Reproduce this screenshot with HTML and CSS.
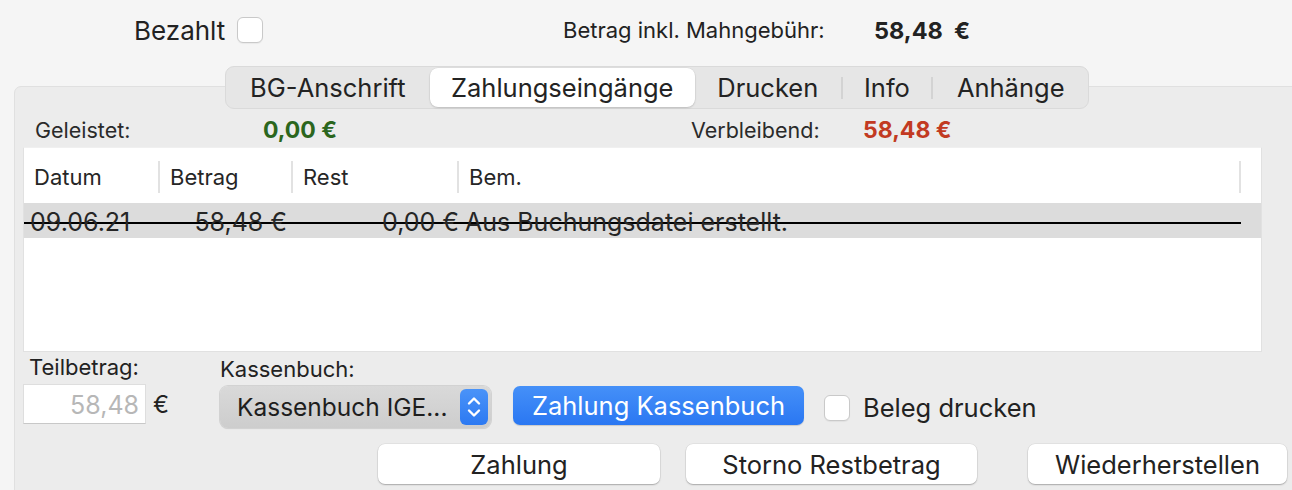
FILE: index.html
```html
<!DOCTYPE html>
<html>
	<head>
		<meta charset="utf-8">
		<title>Zahlungseingänge</title>
		<link rel="stylesheet" href="styles.css">
	</head>
	<body>
	<div class="top_row">
		<span class="paid_label">Bezahlt</span>
		<span class="check"></span>
		<span class="total_label">Betrag inkl. Mahngebühr:</span>
		<span class="total_value">58,48&nbsp; €</span>
	</div>

	<div class="panel">
		<div class="tabbar">
			<span class="tab t_bg">BG-Anschrift</span>
			<span class="tab t_pay selected">Zahlungseingänge</span>
			<span class="tab t_print">Drucken</span>
			<span class="sep"></span>
			<span class="tab t_info">Info</span>
			<span class="sep"></span>
			<span class="tab t_att">Anhänge</span>
		</div>

		<div class="sums">
			<span class="sum_label paid_sum">Geleistet:</span>
			<span class="sum_value green">0,00 €</span>
			<span class="sum_label rest_sum">Verbleibend:</span>
			<span class="sum_value red">58,48 €</span>
		</div>

		<div class="list">
			<table id="table">
				<colgroup>
					<col class="c_date">
					<col class="c_amount">
					<col class="c_rest">
					<col class="c_note">
					<col class="c_end">
				</colgroup>
				<thead>
					<tr>
						<th class="sepd">Datum</th>
						<th class="sepd">Betrag</th>
						<th class="sepd">Rest</th>
						<th class="sepd">Bem.</th>
						<th></th>
					</tr>
				</thead>
				<tbody>
					<tr class="storno">
						<td>09.06.21</td>
						<td class="num">58,48 €</td>
						<td class="num rest">0,00 €</td>
						<td class="note">Aus Buchungsdatei erstellt.</td>
						<td class="end"></td>
					</tr>
				</tbody>
			</table>
		</div>

		<div class="entry">
			<div class="field amount_field">
				<div class="label">Teilbetrag:</div>
				<div class="amount_row">
					<span class="input">58,48</span>
					<span class="euro">€</span>
				</div>
			</div>
			<div class="field book_field">
				<div class="label">Kassenbuch:</div>
				<div class="popup">
					<span class="popup_text">Kassenbuch IGE...</span>
					<span class="stepper">
						<svg width="28" height="36" viewBox="0 0 28 36">
							<path d="M9 14.5 L14 9.5 L19 14.5" fill="none" stroke="#fff" stroke-width="2.4" stroke-linecap="round" stroke-linejoin="round"/>
							<path d="M9 21.5 L14 26.5 L19 21.5" fill="none" stroke="#fff" stroke-width="2.4" stroke-linecap="round" stroke-linejoin="round"/>
						</svg>
					</span>
				</div>
			</div>
			<button type="button" class="blue_btn">Zahlung Kassenbuch</button>
			<span class="check small_check"></span>
			<span class="check_text">Beleg drucken</span>
		</div>

		<div class="actions">
			<button type="button" class="btn b_pay">Zahlung</button>
			<button type="button" class="btn b_storno">Storno Restbetrag</button>
			<button type="button" class="btn b_restore">Wiederherstellen</button>
		</div>
	</div>
	</body>
</html>
```

FILE: styles.css
```css
html,
body {
  height: 100%;
}
body {
  margin: 0;
  overflow: hidden;
  background: #f5f5f5;
  font-family: Inter, "Noto Sans", sans-serif;
  color: #222;
}

/* top line */
.top_row {
  display: flex;
  align-items: center;
  height: 60px;
  margin-bottom: 26px;
}
.paid_label {
  margin-left: 134px;
  width: 90px;
  font-size: 26px;
}
.check {
  display: inline-block;
  box-sizing: border-box;
  width: 26px;
  height: 26px;
  background: #fff;
  border: 1px solid #c9c9c9;
  border-radius: 6px;
  box-shadow: 0 1px 1px rgba(0, 0, 0, 0.05);
}
.top_row .check {
  margin-left: 13px;
}
.total_label {
  margin-left: 300px;
  width: 263px;
  font-size: 22px;
}
.total_value {
  margin-left: 48px;
  font-size: 23.5px;
  font-weight: 700;
}

/* tab box */
.panel {
  width: 1290px;
  height: 420px;
  margin-left: 14px;
  background: #ececec;
  border: 1px solid #e0e0e0;
  border-radius: 7px;
}
.tabbar {
  display: flex;
  align-items: center;
  box-sizing: border-box;
  width: 864px;
  height: 43px;
  margin: -21px 0 0 210px;
  background: #e6e6e6;
  border: 1px solid #dadada;
  border-radius: 9px;
}
.tab {
  box-sizing: border-box;
  height: 39px;
  line-height: 39px;
  text-align: center;
  font-size: 25.5px;
  color: #232323;
}
.t_bg { width: 204px; }
.t_pay { width: 266px; }
.t_print { width: 146px; }
.t_info { width: 89px; }
.t_att { width: 155px; }
.selected {
  background: #fff;
  border-radius: 8px;
  box-shadow: 0 1px 2px rgba(0, 0, 0, 0.15), 0 0 0 0.5px rgba(0, 0, 0, 0.06);
}
.sep {
  width: 2px;
  height: 22px;
  background: #d3d3d3;
}

/* sums */
.sums {
  display: flex;
  align-items: center;
  box-sizing: border-box;
  height: 38px;
  padding: 4px 0 0 20px;
}
.sum_label {
  font-size: 21.5px;
  color: #2a2a2a;
}
.paid_sum { width: 228px; }
.rest_sum { width: 172px; }
.sum_value {
  font-size: 23px;
  font-weight: 700;
}
.green {
  width: 428px;
  color: #2b661d;
}
.red {
  color: #c23a22;
}

/* list */
.list {
  box-sizing: border-box;
  width: 1239px;
  height: 205px;
  margin-left: 8px;
  background: #fff;
  border: 1px solid #e1e1e1;
  border-top-color: #f0f0f0;
}
table {
  width: 100%;
  border-collapse: collapse;
  table-layout: fixed;
}
.c_date { width: 136px; }
.c_amount { width: 133px; }
.c_rest { width: 166px; }
.c_note { width: 782px; }
.c_end { width: 20px; }
th {
  height: 53px;
  padding: 2px 0 0 10px;
  text-align: left;
  font-size: 22px;
  font-weight: 400;
  color: #262626;
}
th.sepd {
  background: linear-gradient(#e2e2e2, #e2e2e2) right 13px / 2px 32px no-repeat;
}
td {
  height: 32px;
  padding: 3px 6px 0;
  font-size: 25px;
  line-height: 30px;
  color: #262626;
  white-space: nowrap;
  background: linear-gradient(#dcdcdc 0 19px, #000 19px 21px, #dcdcdc 21px);
}
td.num {
  text-align: right;
}
td.rest {
  padding-right: 0;
}
td.note {
  overflow: visible;
}
td.end {
  background: #dcdcdc;
}

/* entry fields */
.entry {
  display: flex;
  align-items: flex-end;
  margin: 2px 0 0 8px;
}
.label {
  font-size: 22px;
  line-height: 26px;
  margin-bottom: 4px;
}
.amount_field {
  width: 197px;
}
.amount_field .label {
  padding-left: 6px;
}
.amount_row {
  display: flex;
  align-items: center;
  margin-bottom: 4px;
}
.input {
  box-sizing: border-box;
  width: 123px;
  height: 40px;
  padding-right: 6px;
  line-height: 40px;
  text-align: right;
  font-size: 25px;
  color: #b7b7b7;
  background: #fff;
  border: 1px solid #dedede;
  border-bottom-color: #c8c8c8;
}
.euro {
  margin-left: 7px;
  font-size: 24px;
}
.book_field {
  width: 272px;
}
.popup {
  display: flex;
  align-items: center;
  justify-content: space-between;
  box-sizing: border-box;
  width: 271px;
  height: 42px;
  padding: 0 3px 0 17px;
  background: linear-gradient(#d9d9d9, #cdcdcd);
  border-radius: 8px;
  box-shadow: 0 0 0 1px #d2d2d2, 0 1px 1px rgba(0, 0, 0, 0.12);
}
.popup_text {
  font-size: 24.5px;
  color: #1e1e1e;
}
.stepper {
  display: flex;
  width: 28px;
  height: 36px;
  background: linear-gradient(#4a93f8, #2c79f2);
  border-radius: 6px;
}
.blue_btn {
  width: 291px;
  height: 39px;
  margin: 0 0 3px 21px;
  padding: 0;
  font-family: inherit;
  font-size: 25.5px;
  color: #fff;
  background: linear-gradient(#4590f8, #2a77f2);
  border: none;
  border-radius: 7px;
  box-shadow: 0 1px 1px rgba(0, 0, 0, 0.15);
}
.small_check {
  margin: 0 0 7px 20px;
}
.check_text {
  margin: 0 0 5px 13px;
  font-size: 25.5px;
  line-height: 30px;
}

/* bottom buttons */
.actions {
  display: flex;
  margin-top: 16px;
}
.btn {
  height: 40px;
  padding: 0;
  font-family: inherit;
  font-size: 25.5px;
  color: #222;
  background: #fff;
  border: none;
  border-radius: 7px;
  box-shadow: 0 1px 1.5px rgba(0, 0, 0, 0.25), 0 0 0 0.5px rgba(0, 0, 0, 0.08);
}
.b_pay {
  width: 282px;
  margin-left: 363px;
}
.b_storno {
  width: 291px;
  margin-left: 26px;
}
.b_restore {
  width: 259px;
  margin-left: 51px;
}
```
